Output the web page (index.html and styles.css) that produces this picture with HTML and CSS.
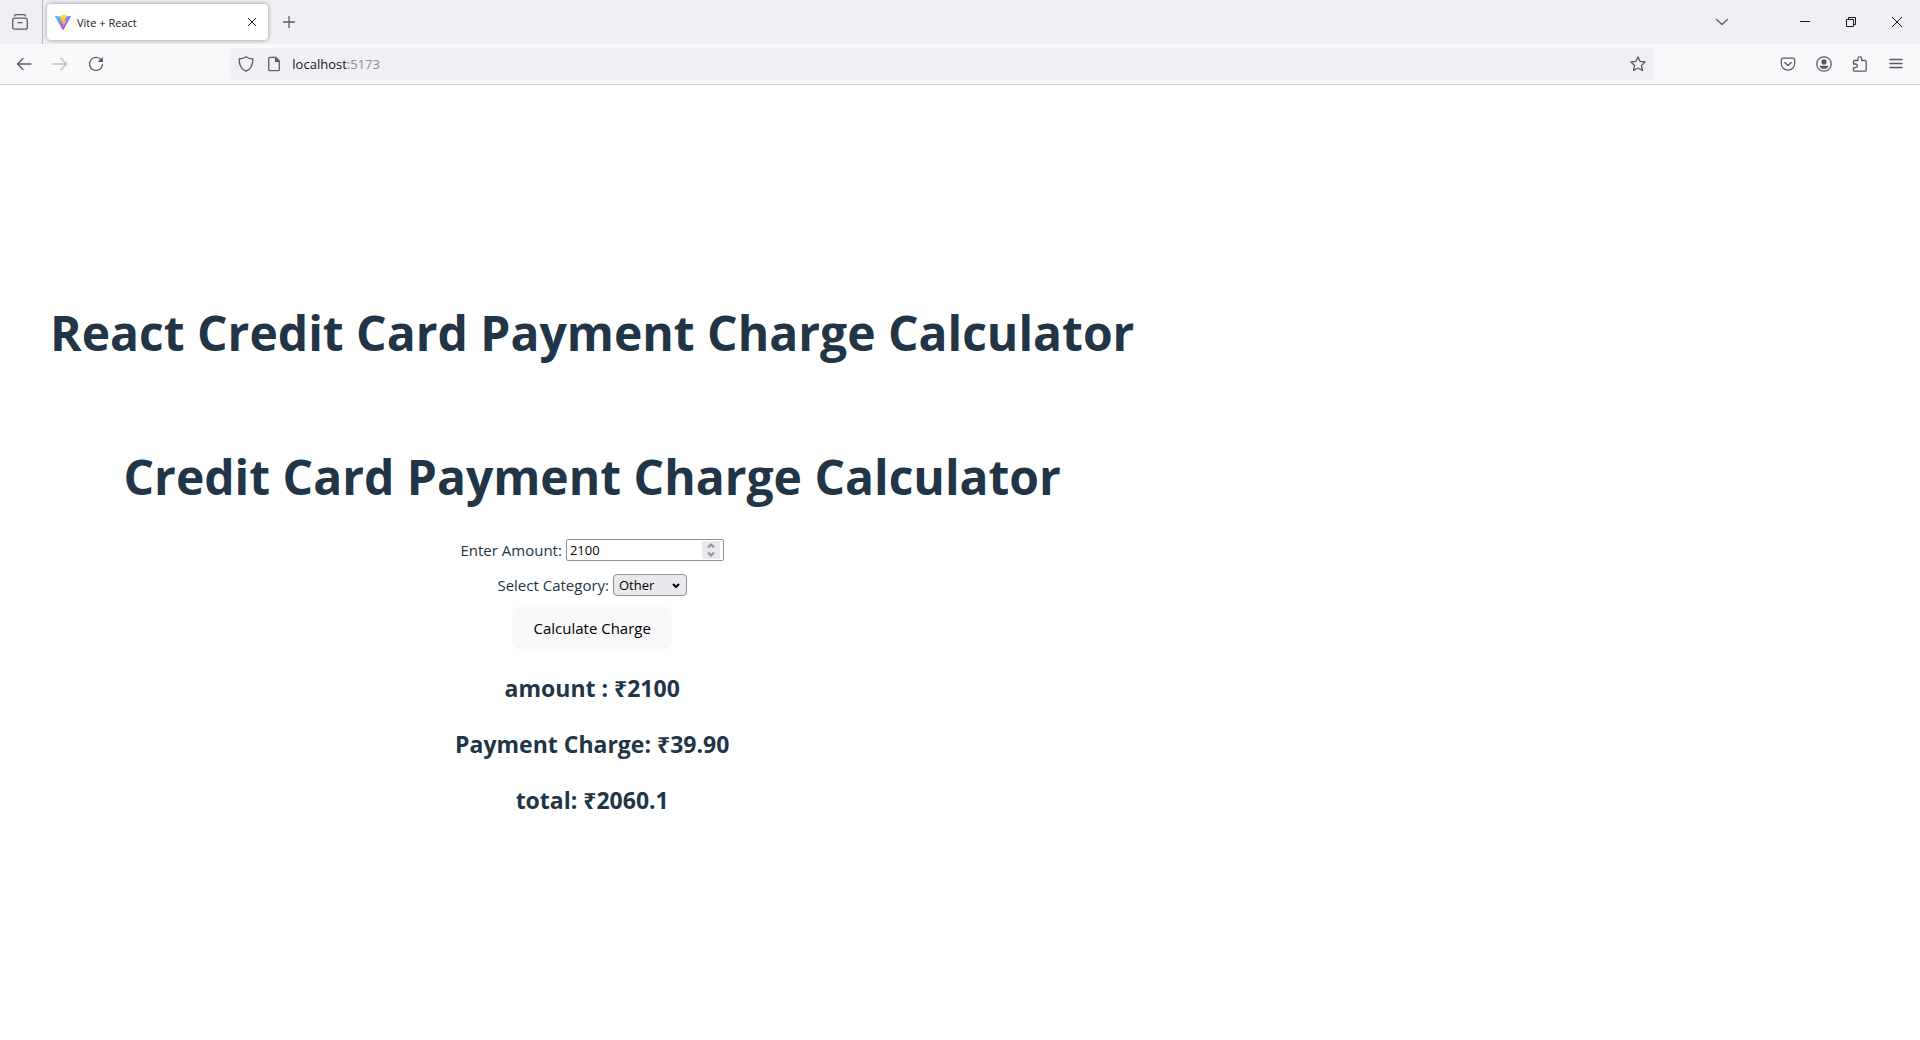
FILE: index.html
```html
<!DOCTYPE html>
<html lang="en">
<head>
<meta charset="utf-8">
<meta name="viewport" content="width=device-width, initial-scale=1">
<title>Vite + React</title>
<link rel="stylesheet" href="styles.css">
</head>
<body>
<header class="browser">
  <div class="tabbar">
    <button class="tool tool-view" aria-label="View recent browsing">
      <svg class="icon" viewBox="0 0 16 16"><path d="M2.5 2.1v-.1a1.3 1.3 0 0 1 1.300-1.300h8.400a1.300 1.300 0 0 1 1.300 1.300v.1"/><rect x=".7" y="4.200" width="14.600" height="11" rx="2"/><path d="M6 8.700h4"/></svg>
    </button>
    <div class="tab">
      <svg class="favicon" viewBox="0 0 32 32"><defs><linearGradient id="vite" x1="0" y1="0" x2=".6" y2="1"><stop offset="0" stop-color="#41d1ff"/><stop offset="1" stop-color="#bd34fe"/></linearGradient><linearGradient id="bolt" x1="0" y1="0" x2="0" y2="1"><stop offset="0" stop-color="#ffea83"/><stop offset=".1" stop-color="#ffdd35"/><stop offset="1" stop-color="#ffa800"/></linearGradient></defs><path fill="url(#vite)" d="M31.900 5 16.900 31.500a1 1 0 0 1-1.700 0L.1 5a1 1 0 0 1 1-1.400L16 6.200l14.900-2.600a1 1 0 0 1 1 1.400z"/><path fill="url(#bolt)" d="M23 .3 12 2.500l-1 12.500 4-.8-1 5.600 3-.8-1.500 7.500 8-13.500-4.500.8L22 7.500z"/></svg>
      <span class="tab-title">Vite + React</span>
      <button class="tab-close" aria-label="Close tab"><svg class="glyph" viewBox="0 0 10 10"><path d="m1 1 8 8M9 1 1 9"/></svg></button>
    </div>
    <button class="tool" aria-label="New tab"><svg class="icon" viewBox="0 0 16 16"><path d="M8 2.500v11M2.500 8h11"/></svg></button>
    <div class="window-controls">
      <button class="tool all-tabs" aria-label="List all tabs"><svg class="icon" viewBox="0 0 16 16"><path d="m2.500 5.500 5.500 5 5.500-5"/></svg></button>
      <button class="win" aria-label="Minimize"><svg class="glyph" viewBox="0 0 10 10"><path d="M0 4.500h10"/></svg></button>
      <button class="win" aria-label="Restore"><svg class="glyph" viewBox="0 0 10 10"><path d="M.5 2.500h7v7h-7zM2.500 2.500v-2h7v7h-2"/></svg></button>
      <button class="win" aria-label="Close"><svg class="glyph" viewBox="0 0 10 10"><path d="m0 0 10 10M10 0 0 10"/></svg></button>
    </div>
  </div>
  <nav class="navbar">
    <button class="tool" aria-label="Back"><svg class="icon" viewBox="0 0 16 16"><path d="M15 8H1.500M7 2.500 1.500 8 7 13.500"/></svg></button>
    <button class="tool" aria-label="Forward" disabled><svg class="icon" viewBox="0 0 16 16"><path d="M1 8h13.500M9 2.500 14.500 8 9 13.500"/></svg></button>
    <button class="tool" aria-label="Reload"><svg class="icon" viewBox="0 0 16 16"><path d="M13.200 4A6.500 6.500 0 1 0 14.500 8.500"/><path class="solid" d="M14.900.9v5.200H9.700z"/></svg></button>
    <div class="spring"></div>
    <div class="urlbar">
      <svg class="icon" viewBox="0 0 16 16"><path d="M8 .8c-2 1.500-4.300 2-6.800 2.200C1 9.300 3 13 8 15.200 13 13 15 9.300 14.800 3 12.300 2.800 10 2.300 8 .8z"/></svg>
      <svg class="icon" viewBox="0 0 16 16"><path d="M9.500 1.300H4A1.300 1.300 0 0 0 2.700 2.600v10.800A1.300 1.300 0 0 0 4 14.700h8a1.300 1.300 0 0 0 1.300-1.300V5z"/><path class="solid" d="M9 1l5 5H9z"/></svg>
      <a class="url" href="http://localhost:5173">localhost<span class="port">:5173</span></a>
      <button class="tool bookmark" aria-label="Bookmark this page"><svg class="icon" viewBox="0 0 16 16"><path d="m8 .9 2.100 4.500 5 .6-3.700 3.400 1 5.100L8 12l-4.400 2.500 1-5.100L.9 6l5-.6z"/></svg></button>
    </div>
    <div class="spring"></div>
    <button class="tool" aria-label="Save to Pocket"><svg class="icon" viewBox="0 0 16 16"><path d="M2.800 2.200h10.400a1.500 1.500 0 0 1 1.500 1.500V7.500a6.700 6.700 0 0 1-13.400 0V3.700a1.500 1.500 0 0 1 1.500-1.500z"/><path d="m4.800 6.500 3.200 3 3.200-3"/></svg></button>
    <button class="tool" aria-label="Account"><svg class="icon" viewBox="0 0 16 16"><circle cx="8" cy="8" r="7.200"/><circle class="solid" cx="8" cy="5.900" r="2.600"/><path class="solid" d="M3.700 9.700h8.600c0 2-1.800 3.300-4.300 3.300s-4.300-1.300-4.300-3.300z"/></svg></button>
    <button class="tool" aria-label="Extensions"><svg class="icon" viewBox="0 0 16 16"><path d="M1.500 8V5.500a1 1 0 0 1 1-1H6V2.600a1.800 1.800 0 0 1 3.600 0v1.900h3.600a1 1 0 0 1 1 1v8.700a1 1 0 0 1-1 1H2.500a1 1 0 0 1-1-1v-2.500h2a1.800 1.800 0 0 0 0-3.700z"/></svg></button>
    <button class="tool" aria-label="Open application menu"><svg class="icon" viewBox="0 0 16 16"><path d="M2 3.500h12M2 7.500h12M2 11.500h12"/></svg></button>
  </nav>
</header>
<main class="page">
  <div class="root">
    <h1 class="app-title">React Credit Card Payment Charge Calculator</h1>
    <form class="calculator">
      <h1>Credit Card Payment Charge Calculator</h1>
      <div class="field">
        <label for="amount">Enter Amount:</label>
        <div class="control">
          <input id="amount" class="amount" type="number" value="2100">
          <svg class="spinner" viewBox="0 0 18 18"><path d="m6 6.500 3-3 3 3M6 11.500l3 3 3-3"/></svg>
        </div>
      </div>
      <div class="field">
        <label for="category">Select Category:</label>
        <div class="control">
          <select id="category" class="category"><option>Other</option></select>
          <svg class="arrow" viewBox="0 0 10 10"><path d="m2 4 3 3 3-3"/></svg>
        </div>
      </div>
      <button type="button" class="calculate">Calculate Charge</button>
      <div class="results">
        <h2>amount : ₹2100</h2>
        <h2>Payment Charge: ₹39.90</h2>
        <h2>total: ₹2060.1</h2>
      </div>
    </form>
  </div>
</main>
</body>
</html>
```
FILE: styles.css
```css
* { box-sizing: border-box; }

body {
  margin: 0;
  min-height: 100vh;
  display: flex;
  flex-direction: column;
  background: #fff;
  color: #213547;
  font-family: "Open Sans", "Noto Sans", sans-serif;
  font-size: 15px;
}

button {
  border: 0;
  padding: 0;
  background: none;
  font: inherit;
}

/* Browser chrome */
.browser {
  border-bottom: 1px solid #ccc;
  background: #f9f9fb;
  color: #15141a;
}

.tabbar {
  display: flex;
  align-items: center;
  height: 44px;
  background: #f0f0f4;
}

.tool {
  width: 36px;
  height: 32px;
  display: grid;
  place-items: center;
  color: #5b5b66;
}

.tool:disabled { color: #bdbdc3; }

.icon {
  display: block;
  width: 16px;
  height: 16px;
  fill: none;
  stroke: currentColor;
  stroke-width: 1.3;
  stroke-linecap: round;
  stroke-linejoin: round;
}

.icon .solid { fill: currentColor; stroke: none; }

.glyph {
  display: block;
  width: 10px;
  height: 10px;
  fill: none;
  stroke: #15141a;
}

.tool-view {
  width: 43px;
  height: 44px;
  padding-right: 2px;
  border-right: 1px solid #b8b8be;
}

.tab {
  display: flex;
  align-items: center;
  gap: 6px;
  width: 221px;
  height: 36px;
  margin: 0 3px 0 4px;
  padding: 0 6px 0 8px;
  border-radius: 4px;
  background: #fff;
  box-shadow: 0 0 4px rgba(0, 0, 0, 0.4);
}

.favicon { width: 16px; height: 16px; }

.tab-title { flex: 1; font-size: 11px; }

.tab-close {
  width: 20px;
  height: 20px;
  display: grid;
  place-items: center;
}

.window-controls {
  display: flex;
  align-items: center;
  margin-left: auto;
}

.all-tabs { margin-right: 42px; }

.win {
  width: 46px;
  height: 44px;
  display: grid;
  place-items: center;
}

.navbar {
  display: flex;
  align-items: center;
  height: 40px;
  padding: 0 6px;
}

.spring { flex: 6; }

.urlbar {
  flex: 73;
  display: flex;
  align-items: center;
  gap: 12px;
  height: 32px;
  padding-left: 8px;
  border-radius: 4px;
  background: #f0f0f4;
  color: #5b5b66;
}

.url {
  flex: 1;
  margin-left: -2px;
  color: #15141a;
  font-size: 13px;
  text-decoration: none;
}

.port { color: #8a8a92; }

.bookmark { width: 32px; }

/* Page */
.page {
  flex: 1;
  display: flex;
  align-items: center;
  padding-bottom: 2px;
}

.root {
  padding: 0 50px;
  text-align: center;
}

h1 {
  margin: 0;
  font-size: 48px;
  line-height: 56px;
  font-weight: 700;
}

.app-title { margin-bottom: 88px; }

.calculator {
  display: flex;
  flex-direction: column;
  align-items: center;
  gap: 9px;
}

.calculator h1 { margin-bottom: 23px; }

.field {
  display: flex;
  align-items: center;
  justify-content: center;
  gap: 4px;
  height: 26px;
}

.control { position: relative; }

.amount,
.category {
  display: block;
  height: 22px;
  border: 1px solid #8f8f9d;
  color: #000;
  font: inherit;
  font-size: 13px;
}

.amount {
  width: 158px;
  padding: 0 22px 0 3px;
  border-radius: 2px;
  background: #fff;
  appearance: textfield;
}

.category {
  width: 74px;
  padding: 0 18px 0 5px;
  border-radius: 4px;
  background: #e9e9ed;
  appearance: none;
}

.spinner,
.arrow {
  position: absolute;
  fill: none;
  pointer-events: none;
}

.spinner {
  top: 2px;
  right: 4px;
  width: 18px;
  height: 18px;
  background: #e9e9ed;
  stroke: #8f8f9d;
  stroke-width: 2;
}

.arrow {
  top: 6px;
  right: 6px;
  width: 10px;
  height: 10px;
  stroke: #000;
  stroke-width: 2;
}

.calculate {
  width: 160px;
  height: 42px;
  border-radius: 8px;
  background: #f9f9f9;
  color: #000;
}

.results {
  display: grid;
  gap: 20px;
  margin-top: 12px;
}

h2 {
  margin: 0;
  font-size: 23px;
  line-height: 36px;
}
```
